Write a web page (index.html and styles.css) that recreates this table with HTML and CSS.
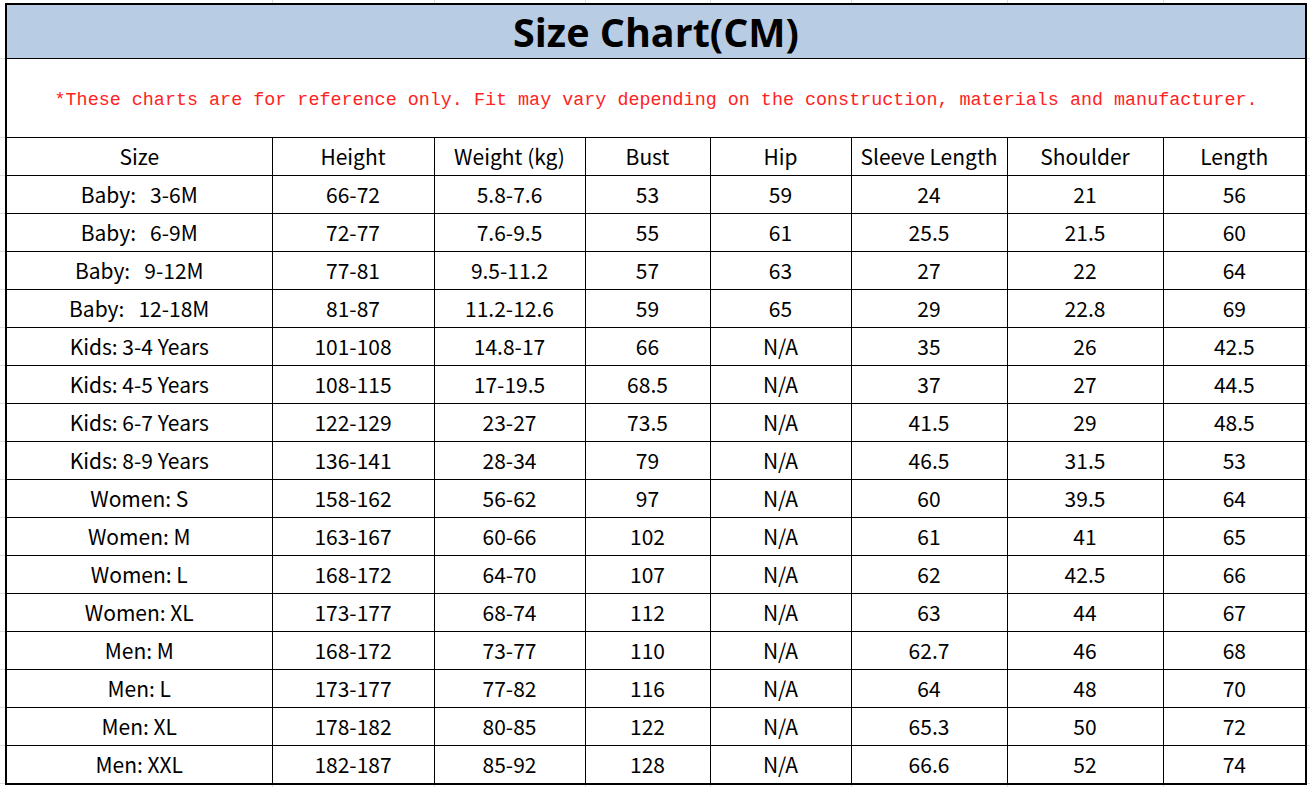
FILE: index.html
```html
<!DOCTYPE html>
<html lang="en">
<head>
<meta charset="utf-8">
<title>Size Chart(CM)</title>
<link rel="stylesheet" href="styles.css">
</head>
<body>
<table class="chart">
  <colgroup>
    <col class="c-size"><col class="c-height"><col class="c-weight"><col class="c-bust"><col class="c-hip"><col class="c-sleeve"><col class="c-shoulder"><col class="c-length">
  </colgroup>
  <thead>
    <tr class="title-row"><th colspan="8">Size Chart(CM)</th></tr>
    <tr class="note-row"><td colspan="8">*These charts are for reference only. Fit may vary depending on the construction, materials and manufacturer.</td></tr>
    <tr class="head-row">
      <th>Size</th><th>Height</th><th>Weight (kg)</th><th>Bust</th><th>Hip</th><th>Sleeve Length</th><th>Shoulder</th><th>Length</th>
    </tr>
  </thead>
  <tbody>
    <tr><td>Baby:&nbsp;&nbsp; 3-6M</td><td>66-72</td><td>5.8-7.6</td><td>53</td><td>59</td><td>24</td><td>21</td><td>56</td></tr>
    <tr><td>Baby:&nbsp;&nbsp; 6-9M</td><td>72-77</td><td>7.6-9.5</td><td>55</td><td>61</td><td>25.5</td><td>21.5</td><td>60</td></tr>
    <tr><td>Baby:&nbsp;&nbsp; 9-12M</td><td>77-81</td><td>9.5-11.2</td><td>57</td><td>63</td><td>27</td><td>22</td><td>64</td></tr>
    <tr><td>Baby:&nbsp;&nbsp; 12-18M</td><td>81-87</td><td>11.2-12.6</td><td>59</td><td>65</td><td>29</td><td>22.8</td><td>69</td></tr>
    <tr><td>Kids: 3-4 Years</td><td>101-108</td><td>14.8-17</td><td>66</td><td>N/A</td><td>35</td><td>26</td><td>42.5</td></tr>
    <tr><td>Kids: 4-5 Years</td><td>108-115</td><td>17-19.5</td><td>68.5</td><td>N/A</td><td>37</td><td>27</td><td>44.5</td></tr>
    <tr><td>Kids: 6-7 Years</td><td>122-129</td><td>23-27</td><td>73.5</td><td>N/A</td><td>41.5</td><td>29</td><td>48.5</td></tr>
    <tr><td>Kids: 8-9 Years</td><td>136-141</td><td>28-34</td><td>79</td><td>N/A</td><td>46.5</td><td>31.5</td><td>53</td></tr>
    <tr><td>Women: S</td><td>158-162</td><td>56-62</td><td>97</td><td>N/A</td><td>60</td><td>39.5</td><td>64</td></tr>
    <tr><td>Women: M</td><td>163-167</td><td>60-66</td><td>102</td><td>N/A</td><td>61</td><td>41</td><td>65</td></tr>
    <tr><td>Women: L</td><td>168-172</td><td>64-70</td><td>107</td><td>N/A</td><td>62</td><td>42.5</td><td>66</td></tr>
    <tr><td>Women: XL</td><td>173-177</td><td>68-74</td><td>112</td><td>N/A</td><td>63</td><td>44</td><td>67</td></tr>
    <tr><td>Men: M</td><td>168-172</td><td>73-77</td><td>110</td><td>N/A</td><td>62.7</td><td>46</td><td>68</td></tr>
    <tr><td>Men: L</td><td>173-177</td><td>77-82</td><td>116</td><td>N/A</td><td>64</td><td>48</td><td>70</td></tr>
    <tr><td>Men: XL</td><td>178-182</td><td>80-85</td><td>122</td><td>N/A</td><td>65.3</td><td>50</td><td>72</td></tr>
    <tr><td>Men: XXL</td><td>182-187</td><td>85-92</td><td>128</td><td>N/A</td><td>66.6</td><td>52</td><td>74</td></tr>
  </tbody>
</table>
</body>
</html>
```
FILE: styles.css
```css
html, body {
  margin: 0;
  padding: 0;
}
body {
  width: 1310px;
  height: 787px;
  overflow: hidden;
  background-color: #fff;
  background-image:
    linear-gradient(to right,
      transparent 272px, #dcdcdc 272px, #dcdcdc 273px, transparent 273px,
      transparent 434px, #dcdcdc 434px, #dcdcdc 435px, transparent 435px,
      transparent 585px, #dcdcdc 585px, #dcdcdc 586px, transparent 586px,
      transparent 710px, #dcdcdc 710px, #dcdcdc 711px, transparent 711px,
      transparent 851px, #dcdcdc 851px, #dcdcdc 852px, transparent 852px,
      transparent 1007px, #dcdcdc 1007px, #dcdcdc 1008px, transparent 1008px,
      transparent 1163px, #dcdcdc 1163px, #dcdcdc 1164px, transparent 1164px),
    linear-gradient(to bottom,
      transparent 58px, #dcdcdc 58px, #dcdcdc 59px, transparent 59px,
      transparent 137px, #dcdcdc 137px, #dcdcdc 138px, transparent 138px),
    repeating-linear-gradient(to bottom, #dcdcdc 0, #dcdcdc 1px, transparent 1px, transparent 38px);
  background-size: 100% 100%, 100% 100%, 100% 646px;
  background-position: 0 0, 0 0, 0 175px;
  background-repeat: no-repeat;
  font-family: "Noto Sans CJK SC", "Noto Sans", sans-serif;
  color: #000;
}

.chart {
  margin: 3px 0 0 5px;
  width: 1302px;
  table-layout: fixed;
  border-collapse: collapse;
  border: 2px solid #000;
  background: #fff;
}

.c-size { width: 266px; }
.c-height { width: 162px; }
.c-weight { width: 151px; }
.c-bust { width: 125px; }
.c-hip { width: 141px; }
.c-sleeve { width: 156px; }
.c-shoulder { width: 156px; }
.c-length { width: 143px; }

.chart th,
.chart td {
  border: 1px solid #000;
  padding: 0;
  text-align: center;
  vertical-align: middle;
  font-size: 21px;
  font-weight: normal;
  line-height: 1;
  white-space: nowrap;
  overflow: hidden;
}

.title-row th {
  height: 51px;
  background: #b8cce4;
  font-size: 39.5px;
  font-weight: bold;
  font-family: "Open Sans", "Noto Sans", sans-serif;
  padding-top: 2px;
}

.note-row td {
  height: 72px;
  color: #f22;
  font-family: "Liberation Mono", "DejaVu Sans Mono", monospace;
  font-size: 18.4px;
  padding-top: 6px;
}

.head-row th,
.chart tbody td {
  height: 37px;
}
```
